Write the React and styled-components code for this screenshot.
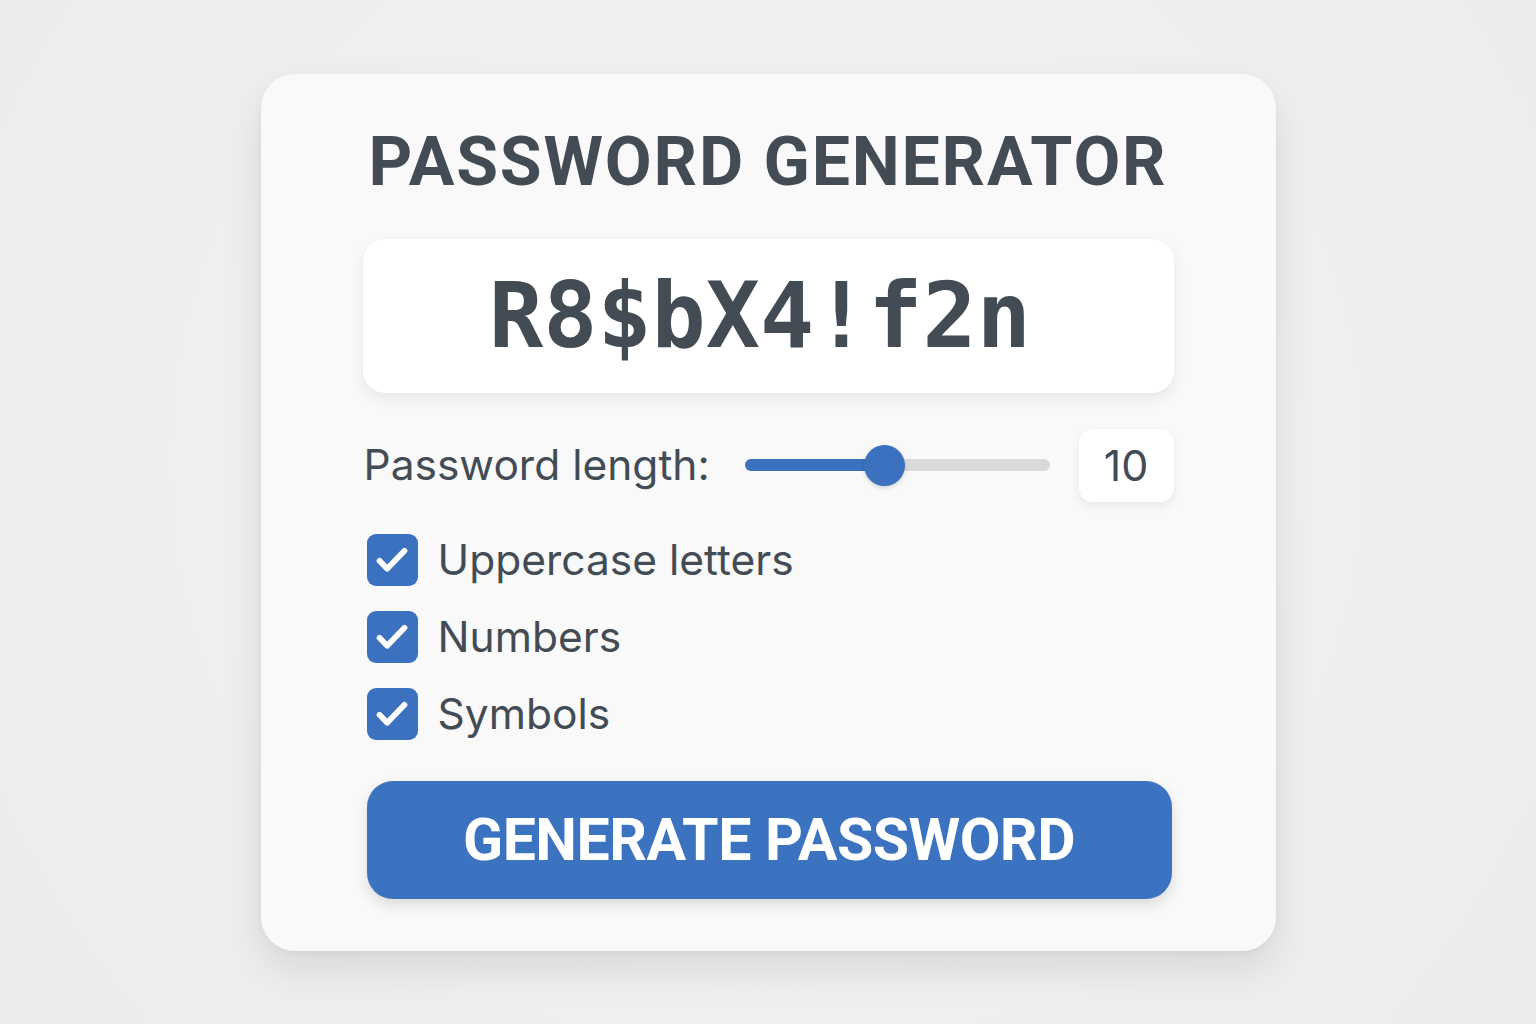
import React, { useState } from "react"
import styled, { createGlobalStyle } from "styled-components"

const GlobalStyle = createGlobalStyle`
  html, body {
    margin: 0;
    padding: 0;
    background: #efefef;
    font-family: Inter, "Noto Sans", sans-serif;
  }
`

const Page = styled.div`
  min-height: 100vh;
  display: flex;
  align-items: center;
  justify-content: center;
  background: radial-gradient(circle at 50% 45%, #f4f4f4 0%, #ececec 100%);
`

const Card = styled.div`
  width: 1015px;
  box-sizing: border-box;
  padding: 48px 102px 52px;
  background: #f9f9f9;
  border-radius: 34px;
  box-shadow: 0 18px 40px rgba(0, 0, 0, 0.1), 0 2px 6px rgba(0, 0, 0, 0.04);
  display: flex;
  flex-direction: column;
  color: #434c54;
`

const Title = styled.h1`
  margin: 0;
  font-family: Roboto, "Liberation Sans", sans-serif;
  font-size: 68px;
  line-height: 80px;
  font-weight: 700;
  letter-spacing: 1.8px;
  text-align: center;
  white-space: nowrap;
`

const Output = styled.div`
  margin-top: 37px;
  height: 154px;
  background: #ffffff;
  border-radius: 22px;
  box-shadow: 0 6px 14px rgba(0, 0, 0, 0.08);
  display: flex;
  align-items: center;
  justify-content: center;
  padding-right: 16px;
  font-family: "DejaVu Sans Mono", monospace;
  font-size: 90px;
  font-weight: 700;
`

const LengthRow = styled.div`
  margin-top: 36px;
  display: flex;
  align-items: center;
  height: 73px;
`

const Label = styled.span`
  font-size: 42.5px;
  line-height: 1;
  margin-left: 1px;
`

const Track = styled.div`
  position: relative;
  margin-left: 35px;
  width: 305px;
  height: 12px;
  border-radius: 6px;
  background: #d9d9d9;
`

const Fill = styled.div`
  height: 100%;
  border-radius: 6px;
  background: #3b71bf;
`

const Thumb = styled.div`
  position: absolute;
  top: 50%;
  width: 41px;
  height: 41px;
  margin: -20.5px 0 0 -20.5px;
  border-radius: 50%;
  background: #3b71bf;
  box-shadow: 0 2px 4px rgba(0, 0, 0, 0.15);
`

const NumberBox = styled.div`
  margin-left: auto;
  width: 95px;
  height: 73px;
  background: #ffffff;
  border-radius: 14px;
  box-shadow: 0 4px 10px rgba(0, 0, 0, 0.07);
  display: flex;
  align-items: center;
  justify-content: center;
  font-size: 43px;
`

const Options = styled.div`
  margin-top: 32px;
  display: flex;
  flex-direction: column;
  gap: 25px;
`

const Option = styled.label`
  display: flex;
  align-items: center;
  gap: 20px;
  padding-left: 4px;
  font-size: 42.5px;
  line-height: 52px;
  cursor: pointer;
`

const Box = styled.span`
  width: 51px;
  height: 52px;
  border-radius: 9px;
  background: ${(p) => (p.checked ? "#3b71bf" : "#ffffff")};
  display: flex;
  align-items: center;
  justify-content: center;
  flex-shrink: 0;
`

const Button = styled.button`
  margin: 41px 2px 0 4px;
  height: 118px;
  border: none;
  border-radius: 26px;
  background: #3b73c0;
  color: #ffffff;
  font-family: Roboto, "Liberation Sans", sans-serif;
  font-size: 59px;
  font-weight: 700;
  letter-spacing: -0.5px;
  box-shadow: 0 6px 14px rgba(0, 0, 0, 0.12);
  cursor: pointer;
`

function Check() {
  return (
    <svg width="40" height="40" viewBox="0 0 24 24" fill="none">
      <path
        d="M4.5 12.5l4.6 4.8L19.5 6.5"
        stroke="#ffffff"
        strokeWidth="3.4"
        strokeLinecap="round"
        strokeLinejoin="round"
      />
    </svg>
  )
}

export default function App() {
  const [opts, setOpts] = useState({ upper: true, numbers: true, symbols: true })
  const length = 10
  const pct = 46
  const toggle = (k) => setOpts({ ...opts, [k]: !opts[k] })

  const items = [
    ["upper", "Uppercase letters"],
    ["numbers", "Numbers"],
    ["symbols", "Symbols"],
  ]

  return (
    <Page>
      <GlobalStyle />
      <Card>
        <Title>PASSWORD GENERATOR</Title>
        <Output>R8$bX4!f2n</Output>
        <LengthRow>
          <Label>Password length:</Label>
          <Track>
            <Fill style={{ width: `${pct}%` }} />
            <Thumb style={{ left: `${pct}%` }} />
          </Track>
          <NumberBox>{length}</NumberBox>
        </LengthRow>
        <Options>
          {items.map(([k, text]) => (
            <Option key={k} onClick={() => toggle(k)}>
              <Box checked={opts[k]}>{opts[k] && <Check />}</Box>
              {text}
            </Option>
          ))}
        </Options>
        <Button>GENERATE PASSWORD</Button>
      </Card>
    </Page>
  )
}
